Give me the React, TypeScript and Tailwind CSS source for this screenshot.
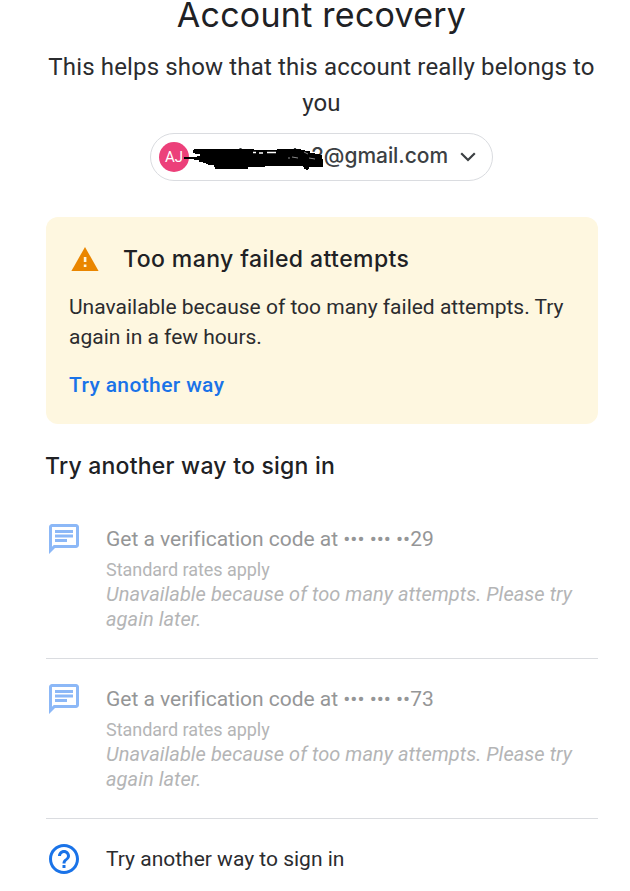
import React from "react";

const heading = "font-['Inter','Open_Sans',sans-serif]";

function SmsIcon() {
  return (
    <svg viewBox="0 0 24 24" className="-mt-px size-9 shrink-0 fill-[#8cb8f7]">
      <path d="M4 4h16v12H5.17L4 17.17V4m0-2c-1.1 0-1.99.9-1.99 2L2 22l4-4h14c1.1 0 2-.9 2-2V4c0-1.1-.9-2-2-2H4zm2 10h8v2H6v-2zm0-3h12v2H6V9zm0-3h12v2H6V6z" />
    </svg>
  );
}

function CodeOption({ digits }: { digits: string }) {
  return (
    <li className="flex h-40 gap-6 border-b border-[#dadce0] pt-[23px]">
      <SmsIcon />
      <div className="whitespace-nowrap pt-[2px] text-[#b4b5b6]">
        <p className="text-[21px] leading-[30px] tracking-[-0.02px] text-[#959697]">
          Get a verification code at ••• ••• ••{digits}
        </p>
        <p className="mt-[3px] text-[18px] leading-[25px] tracking-[-0.04px]">Standard rates apply</p>
        <p className="text-[20px] italic leading-[25px] tracking-[0.05px]">
          Unavailable because of too many attempts. Please try
          <br />
          again later.
        </p>
      </div>
    </li>
  );
}

export default function App() {
  return (
    <main className="h-[891px] overflow-hidden bg-white pl-[46px] pr-8 font-['Roboto',sans-serif] text-[#202124]">
      <header className="-ml-px flex flex-col items-center">
        <h1 className={`${heading} -mt-[9px] h-[57px] whitespace-nowrap text-[34px] leading-[48px] tracking-[0.25px]`}>Account recovery</h1>
        <p className="mt-px whitespace-nowrap text-center text-[24px] leading-9 tracking-[0.15px] text-[#2b2c2f]">
          This helps show that this account really belongs to
          <br />
          you
        </p>
        <div className="relative mt-3 flex h-12 w-[343px] items-center rounded-full border border-[#dadce0] pl-2">
          <span className="flex size-[30px] items-center justify-center rounded-full bg-[#ec407a] text-[15px] text-white">AJ</span>
          <span className={`${heading} relative -top-px ml-auto mr-[12px] text-[21px] font-medium tracking-[-0.05px] text-[#3c4043]`}>2@gmail.com</span>
          <svg viewBox="0 0 16 10" className="mr-4 h-[10px] w-4 fill-none stroke-[#3c4043] stroke-[2.2]">
            <path d="M1.2 1.2 8 8l6.8-6.8" />
          </svg>
          <svg viewBox="0 0 190 65" className="absolute -left-[11px] -top-[9px] h-[65px] w-[190px]">
            <path d="M63 34v3M71 34v3M100.500 23v4M155 23v5" stroke="#3c4043" strokeWidth="2.2" />
            <path
              d="M44 32h13v-1h3v-2h-5v-1h-2v-3h1v-1h60v1h23v-1h24v1h4v1h5v2h5v1h5v1h2v4h1v8h-14v2h-1v1h-2v-1h-2v-2h-1v-1h-38v1h-17v2H75v-2h-1v-2h-6v-1h-2v-1h-3v-1h-4v-2h-5v-1H44z"
              fill="#000"
            />
            <path d="M113 27.500h3M119 28h4M127 27.500h9" stroke="#fff" strokeWidth="1.6" />
            <path d="M148 33h2M152 32l6 1M164 27l4 2M169 33l6 1" fill="none" stroke="#8a8a8a" strokeWidth="1" />
          </svg>
        </div>
      </header>

      <section className="mt-9 h-[207px] rounded-xl bg-[#fef7e0] px-6 pt-[24px]">
        <div className="flex items-center">
          <svg viewBox="0 0 28 24" className="-mt-px ml-[1px] h-6 w-7">
            <path d="M14 0 27.6 24H.4z" fill="#ea8600" />
            <path d="M12.8 10h2.600v5h-2.600zM12.8 17.500h2.600V20h-2.600z" fill="#fef7e0" />
          </svg>
          <h2 className={`${heading} ml-[24px] whitespace-nowrap text-[23px] font-medium leading-9 tracking-[0.42px]`}>Too many failed attempts</h2>
        </div>
        <p className="-ml-px mt-[15px] whitespace-nowrap text-[21px] leading-[30px] text-[#2b2c2f]">
          Unavailable because of too many failed attempts. Try
          <br />
          again in a few hours.
        </p>
        <p className="-ml-px mt-[18px] text-[21px] font-medium leading-[30px] tracking-[0.375px] text-[#1a73e8]">Try another way</p>
      </section>

      <h2 className={`${heading} mt-6 -ml-px whitespace-nowrap text-[23px] font-medium leading-9 tracking-[0.23px]`}>Try another way to sign in</h2>
      <ul className="mt-[15px]">
        <CodeOption digits="29" />
        <CodeOption digits="73" />
        <li className="flex items-center gap-6 pt-[22px]">
          <svg viewBox="0 0 24 24" className="size-9 fill-[#1a73e8]">
            <path d="M11 18h2v-2h-2v2zm1-16C6.48 2 2 6.48 2 12s4.48 10 10 10 10-4.48 10-10S17.52 2 12 2zm0 18c-4.41 0-8-3.59-8-8s3.59-8 8-8 8 3.59 8 8-3.59 8-8 8zm0-14c-2.21 0-4 1.79-4 4h2c0-1.1.9-2 2-2s2 .9 2 2c0 2-3 1.75-3 5h2c0-2.25 3-2.5 3-5 0-2.21-1.79-4-4-4z" />
          </svg>
          <p className="text-[21px] leading-[30px] text-[#2b2c2f]">Try another way to sign in</p>
        </li>
      </ul>
    </main>
  );
}
